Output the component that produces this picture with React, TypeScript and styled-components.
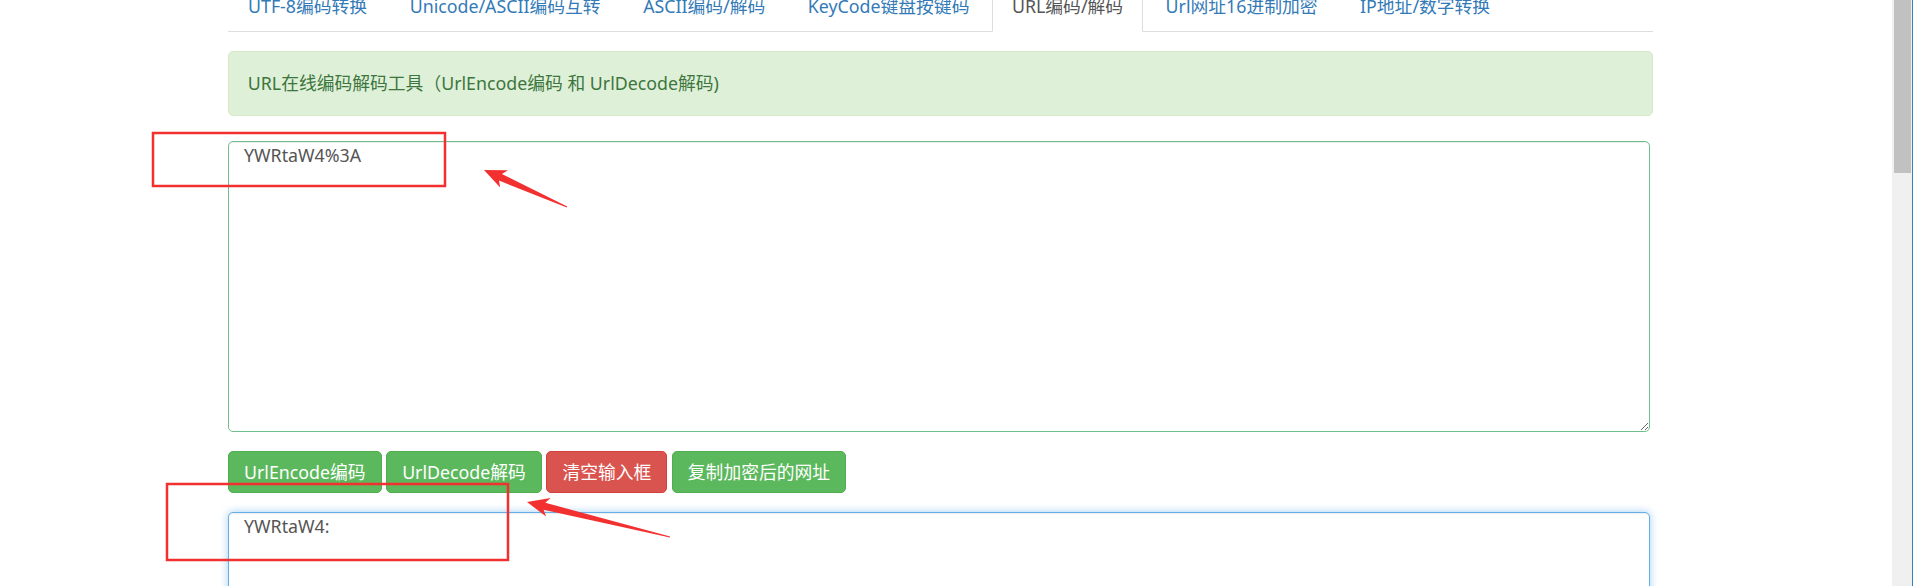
import React from 'react';
import styled, { createGlobalStyle } from 'styled-components';

const GlobalStyle = createGlobalStyle`
  html, body {
    margin: 0;
    padding: 0;
    background: #fff;
    overflow: hidden;
  }
  body {
    font-family: "Noto Sans", "Noto Sans CJK SC", sans-serif;
    font-size: 17.8px;
    line-height: 25px;
    color: #333;
  }
`;

const Page = styled.div`
  display: flex;
  width: 1913px;
  height: 586px;
  overflow: hidden;
`;

const Main = styled.div`
  position: relative;
  flex: 1;
  overflow: hidden;
  background: #fff;
`;

const Container = styled.div`
  width: 1425px;
  margin: -20px 0 0 228px;
`;

const Tabs = styled.ul`
  display: flex;
  margin: 0;
  padding: 0;
  list-style: none;
  border-bottom: 1px solid #ddd;
`;

const Tab = styled.li<{ $active?: boolean }>`
  margin: 0 2.5px -1px 0;
  padding: 12.5px 19px;
  border: 1px solid ${p => (p.$active ? '#ddd' : 'transparent')};
  border-bottom-color: transparent;
  border-radius: 5px 5px 0 0;
  background: ${p => (p.$active ? '#fff' : 'transparent')};
  color: ${p => (p.$active ? '#555' : '#337ab7')};
  white-space: nowrap;
`;

const Alert = styled.div`
  margin-top: 19px;
  padding: 18.75px;
  border: 1px solid #d6e9c6;
  border-radius: 5px;
  background: #dff0d8;
  color: #3c763d;
`;

const TextBox = styled.textarea<{ $tone: 'success' | 'focus'; $height: number }>`
  display: block;
  box-sizing: border-box;
  width: 1422px;
  height: ${p => p.$height}px;
  margin: 0;
  padding: 1px 15px 7.5px;
  border: 1px solid ${p => (p.$tone === 'success' ? '#6fbf8c' : '#66afe9')};
  border-radius: 5px;
  outline: none;
  resize: vertical;
  font: inherit;
  color: #555;
  background: #fff;
  box-shadow: ${p =>
    p.$tone === 'focus'
      ? 'inset 0 1px 1px rgba(0,0,0,.075), 0 0 8px rgba(102,175,233,.6)'
      : 'inset 0 1px 1px rgba(0,0,0,.075)'};
`;

const Field = styled.div<{ $top: number }>`
  margin-top: ${p => p.$top}px;
`;

const ButtonRow = styled.div`
  display: flex;
  gap: 4.5px;
  margin-top: 19.5px;
`;

const Button = styled.button<{ $kind: 'success' | 'danger' }>`
  padding: 7.5px 15px;
  border: 1px solid ${p => (p.$kind === 'danger' ? '#d43f3a' : '#4cae4c')};
  border-radius: 5px;
  background: ${p => (p.$kind === 'danger' ? '#d9534f' : '#5cb85c')};
  color: #fff;
  font: inherit;
  white-space: nowrap;
  cursor: pointer;
`;

const Overlay = styled.svg`
  position: absolute;
  left: 0;
  top: 0;
  width: 1892px;
  height: 586px;
  pointer-events: none;
`;

const Scrollbar = styled.div`
  display: flex;
  width: 21px;
  height: 586px;
`;

const Track = styled.div`
  width: 20px;
  background: #f0f0f0;
  padding-left: 2px;
  box-sizing: border-box;
`;

const Thumb = styled.div`
  width: 17px;
  height: 173px;
  background: #c1c1c1;
`;

const Frame = styled.div`
  width: 1px;
  background: #2f86b5;
`;

type ArrowProps = { x1: number; y1: number; x2: number; y2: number };

// red screenshot-tool arrow: thin tail, widening shaft, solid head
const Arrow: React.FC<ArrowProps> = ({ x1, y1, x2, y2 }) => {
  const dx = x2 - x1;
  const dy = y2 - y1;
  const len = Math.hypot(dx, dy);
  const ux = dx / len;
  const uy = dy / len;
  const nx = -uy;
  const ny = ux;
  const head = 22;
  const pt = (along: number, side: number) =>
    `${(x2 - ux * along + nx * side).toFixed(1)},${(y2 - uy * along + ny * side).toFixed(1)}`;
  const points = [
    pt(len, 0.6),
    pt(head - 4, 3.6),
    pt(head, 9.5),
    pt(0, 0),
    pt(head, -9.5),
    pt(head - 4, -3.6),
    pt(len, -0.6),
  ].join(' ');
  return <polygon points={points} fill="#f23030" />;
};

const tabs = [
  'UTF-8编码转换',
  'Unicode/ASCII编码互转',
  'ASCII编码/解码',
  'KeyCode键盘按键码',
  'URL编码/解码',
  'Url网址16进制加密',
  'IP地址/数字转换',
];

const App: React.FC = () => {
  return (
    <>
      <GlobalStyle />
      <Page>
        <Main>
          <Container>
            <Tabs>
              {tabs.map(t => (
                <Tab key={t} $active={t === 'URL编码/解码'}>
                  {t}
                </Tab>
              ))}
            </Tabs>
            <Alert>URL在线编码解码工具（UrlEncode编码 和 UrlDecode解码)</Alert>
            <Field $top={25}>
              <TextBox $tone="success" $height={291} defaultValue="YWRtaW4%3A" />
            </Field>
            <ButtonRow>
              <Button $kind="success">UrlEncode编码</Button>
              <Button $kind="success">UrlDecode解码</Button>
              <Button $kind="danger">清空输入框</Button>
              <Button $kind="success">复制加密后的网址</Button>
            </ButtonRow>
            <Field $top={19}>
              <TextBox $tone="focus" $height={200} defaultValue="YWRtaW4:" />
            </Field>
          </Container>
          <Overlay viewBox="0 0 1892 586">
            <rect x={153} y={133} width={292} height={53} fill="none" stroke="#f23030" strokeWidth={2.5} />
            <rect x={167} y={484} width={341} height={76} fill="none" stroke="#f23030" strokeWidth={2.5} />
            <Arrow x1={567} y1={207} x2={484} y2={170} />
            <Arrow x1={670} y1={537} x2={527} y2={502} />
          </Overlay>
        </Main>
        <Scrollbar>
          <Track>
            <Thumb />
          </Track>
          <Frame />
        </Scrollbar>
      </Page>
    </>
  );
};

export default App;
